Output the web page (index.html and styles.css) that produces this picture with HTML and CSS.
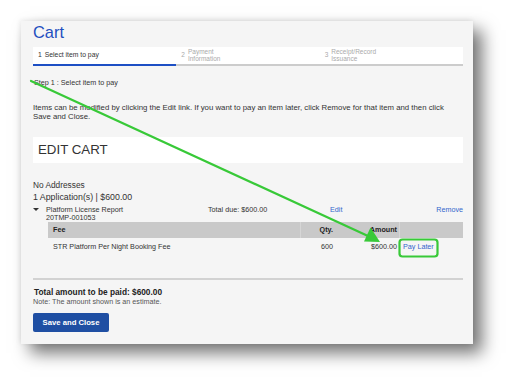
FILE: index.html
```html
<!DOCTYPE html>
<html>
<head>
<meta charset="utf-8">
<link rel="stylesheet" href="styles.css">
</head>
<body>
<div class="page">
  <div class="panel">
    <div class="title">Cart</div>
    <div class="steps">
      <div class="step active"><span class="num">1</span><span class="lbl">Select item to pay</span></div>
      <div class="step"><span class="num">2</span><span class="lbl">Payment<br>Information</span></div>
      <div class="step"><span class="num">3</span><span class="lbl">Receipt/Record<br>Issuance</span></div>
    </div>
    <div class="intro">Step 1 : Select item to pay</div>
    <p class="info">Items can be modified by clicking the Edit link. If you want to pay an item later, click Remove for that item and then click<br>Save and Close.</p>
    <div class="edit-cart">EDIT CART</div>
    <div class="addr">No Addresses</div>
    <div class="apps">1 Application(s) | $600.00</div>
    <div class="app-row">
      <span class="caret"></span>
      <span class="app-name">Platform License Report<br>20TMP-001053</span>
      <span class="due">Total due: $600.00</span>
      <a class="link">Edit</a>
      <a class="link">Remove</a>
    </div>
    <div class="fees">
      <div class="fh fee">Fee</div>
      <div class="fh qty">Qty.</div>
      <div class="fh amt">Amount</div>
      <div class="fh act"></div>
      <div class="fc fee">STR Platform Per Night Booking Fee</div>
      <div class="fc qty">600</div>
      <div class="fc amt">$600.00</div>
      <div class="fc act"><a class="link">Pay Later</a></div>
    </div>
    <div class="rule"></div>
    <div class="total">Total amount to be paid: $600.00</div>
    <div class="note">Note: The amount shown is an estimate.</div>
    <button class="save">Save and Close</button>
  </div>
</div>
<svg class="overlay" width="515" height="386" viewBox="0 0 515 386">
  <line x1="31" y1="81" x2="368" y2="236" stroke="#38c938" stroke-width="2.2" stroke-linecap="round"/>
  <polygon points="380,242 364,241.5 370.5,227.5" fill="#38c938"/>
  <rect x="399.5" y="239.5" width="38" height="17" rx="3" ry="3" fill="none" stroke="#38c938" stroke-width="2.2"/>
</svg>
</body>
</html>
```

FILE: styles.css
```css
html, body {
  margin: 0;
  padding: 0;
  background: #ffffff;
}
body {
  width: 515px;
  height: 386px;
  overflow: hidden;
  position: relative;
  font-family: "Liberation Sans", Arial, sans-serif;
  color: #333333;
}
.page {
  padding: 21px;
}
.panel {
  height: 323px;
  box-sizing: border-box;
  width: 452px;
  padding: 0 10px 0 12px;
  background: #f5f5f5;
  box-shadow: 9px 9px 16px rgba(0, 0, 0, 0.55), -1px -1px 5px rgba(0, 0, 0, 0.08);
  overflow: hidden;
}
.title {
  margin-top: 1px;
  font-size: 16.4px;
  line-height: 20px;
  color: #1f4fc0;
}
.steps {
  margin-top: 5px;
  display: flex;
  background: #ffffff;
}
.step {
  flex: 1;
  height: 17px;
  border-bottom: 2px solid #cccccc;
  display: flex;
  align-items: center;
  padding-left: 5px;
  gap: 3px;
  color: #aaaaaa;
  font-size: 6.5px;
  line-height: 6.7px;
}
.step.active {
  border-bottom-color: #1d4fc4;
  color: #333333;
  font-size: 6.8px;
}
.intro {
  margin-top: 12px;
  padding-left: 1px;
  font-size: 7.2px;
  line-height: 10px;
}
.info {
  margin: 15px 0 0 0;
  font-size: 7.8px;
  line-height: 9px;
}
.edit-cart {
  margin-top: 16px;
  height: 26px;
  background: #ffffff;
  padding-left: 5px;
  font-size: 13.3px;
  line-height: 26px;
  color: #333333;
}
.addr {
  margin-top: 17px;
  font-size: 8.3px;
  line-height: 10px;
}
.apps {
  margin-top: 2px;
  font-size: 8.8px;
  line-height: 11px;
}
.app-row {
  margin-top: 3px;
  display: grid;
  grid-template-columns: 13px 162px 122px 1fr auto;
  font-size: 7.2px;
  line-height: 7.5px;
}
.caret {
  width: 0;
  height: 0;
  margin-top: 2px;
  border-left: 3px solid transparent;
  border-right: 3px solid transparent;
  border-top: 3.5px solid #333333;
}
.link {
  color: #3366cc;
  text-decoration: none;
}
.fees {
  margin-top: 1px;
  margin-left: 15px;
  display: grid;
  grid-template-columns: 252px 36px 63px 64px;
  font-size: 7.2px;
}
.fh {
  height: 16px;
  line-height: 16px;
  background: #c9c9c9;
  font-weight: bold;
  color: #222222;
}
.fc {
  height: 18px;
  line-height: 18px;
}
.fee {
  padding-left: 5px;
}
.qty {
  text-align: right;
  padding-right: 3px;
}
.amt {
  text-align: right;
  padding-right: 2px;
}
.act {
  padding-left: 4px;
}
.fh.qty, .fh.act {
  box-shadow: inset 1px 0 0 #d6d6d6;
}
.rule {
  margin-top: 22px;
  height: 2px;
  background: #d2d2d2;
}
.total {
  margin-top: 7px;
  font-size: 8.3px;
  line-height: 10px;
  font-weight: bold;
  color: #222222;
  padding-left: 1px;
}
.note {
  font-size: 7.2px;
  line-height: 9px;
  color: #555555;
}
.save {
  margin-top: 7px;
  height: 19px;
  width: 76px;
  padding: 0;
  border: none;
  border-radius: 2px;
  background: #1f4fa3;
  color: #ffffff;
  font-family: "Liberation Sans", Arial, sans-serif;
  font-weight: bold;
  font-size: 7.7px;
}
.overlay {
  position: absolute;
  left: 0;
  top: 0;
}
```
